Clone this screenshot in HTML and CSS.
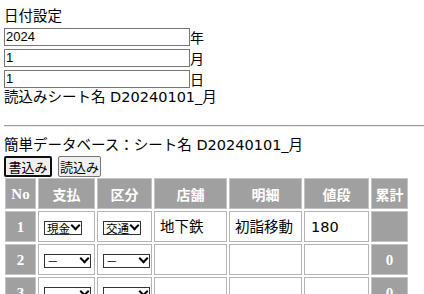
FILE: index.html
```html
<!DOCTYPE html>
<html lang="ja">
<head>
<meta charset="utf-8">
<title>簡単データベース</title>
<link rel="stylesheet" href="styles.css">
</head>
<body>
<div class="title">日付設定</div>
<div class="date-row"><input class="date-input" type="text" value="2024"><span class="unit">年</span></div>
<div class="date-row"><input class="date-input" type="text" value="1"><span class="unit">月</span></div>
<div class="date-row"><input class="date-input" type="text" value="1"><span class="unit">日</span></div>
<div class="sheet">読込みシート名 D20240101_月</div>
<hr class="rule">
<div class="db-title">簡単データベース：シート名 D20240101_月</div>
<div class="buttons">
  <button class="btn btn-focus" type="button">書込み</button>
  <button class="btn" type="button">読込み</button>
</div>
<table class="db">
  <tr>
    <th class="c-no latin">No</th>
    <th class="c-pay">支払</th>
    <th class="c-kind">区分</th>
    <th class="c-shop">店舗</th>
    <th class="c-memo">明細</th>
    <th class="c-price">値段</th>
    <th class="c-sum">累計</th>
  </tr>
  <tr>
    <th class="latin">1</th>
    <td><span class="sel sel-narrow"><select><option>現金</option><option>－</option></select></span></td>
    <td><span class="sel sel-narrow"><select><option>交通</option><option>－</option></select></span></td>
    <td>地下鉄</td>
    <td>初詣移動</td>
    <td class="price">180</td>
    <th class="latin"></th>
  </tr>
  <tr>
    <th class="latin">2</th>
    <td><span class="sel"><select><option>－</option><option>現金</option></select></span></td>
    <td><span class="sel"><select><option>－</option><option>交通</option></select></span></td>
    <td></td>
    <td></td>
    <td class="price"></td>
    <th class="latin">0</th>
  </tr>
  <tr>
    <th class="latin">3</th>
    <td><span class="sel"><select><option>－</option><option>現金</option></select></span></td>
    <td><span class="sel"><select><option>－</option><option>交通</option></select></span></td>
    <td></td>
    <td></td>
    <td class="price"></td>
    <th class="latin">0</th>
  </tr>
</table>
</body>
</html>
```
FILE: styles.css
```css
html, body {
  margin: 0;
  background: #fff;
}
body {
  padding: 4px 0 0 4px;
  font-family: "DejaVu Sans", "Noto Sans CJK JP", sans-serif;
  font-size: 14.5px;
  line-height: 20px;
  color: #000;
}
.title {
  height: 22px;
  line-height: 24px;
}
.date-row {
  display: flex;
  align-items: center;
  height: 21px;
}
.date-input {
  box-sizing: border-box;
  width: 186px;
  height: 18px;
  margin: 0;
  padding: 0 1px;
  border: 1px solid #767676;
  font-family: "Liberation Sans", Arial, sans-serif;
  font-size: 13px;
  color: #000;
  background: #fff;
}
.unit {
  line-height: 18px;
  font-family: "Noto Sans CJK JP", sans-serif;
  font-size: 14px;
}
.sheet {
  height: 20px;
  margin-top: -2px;
}
.rule {
  margin: 18px 0 0 0;
  height: 0;
  border: 0;
  border-top: 1px solid #9a9a9a;
  border-bottom: 1px solid #eee;
}
.db-title {
  margin-top: 8px;
  height: 20px;
}
.buttons {
  display: flex;
  gap: 6px;
  margin-top: 1px;
}
.btn {
  box-sizing: border-box;
  height: 21px;
  width: 43px;
  margin: 0;
  padding: 0;
  border: 1px solid #767676;
  border-radius: 2px;
  background: #efefef;
  font-family: "Noto Sans CJK JP", sans-serif;
  font-size: 13px;
  line-height: 18px;
  color: #000;
}
.btn-focus {
  width: 48px;
  border: 2px solid #101010;
}
.db {
  border-collapse: separate;
  border-spacing: 2px;
  margin: -1px 0 0 -1px;
  table-layout: fixed;
  width: 407px;
}
.db th, .db td {
  box-sizing: border-box;
  height: 31px;
  padding: 0 2px;
  border: 1px solid #b4b4b4;
  vertical-align: middle;
  overflow: hidden;
  white-space: nowrap;
}
.db th {
  background: #a0a0a0;
  color: #fff;
  font-family: "Noto Sans CJK JP", sans-serif;
  font-weight: bold;
  font-size: 14px;
  text-align: center;
  border-color: #c4c4c4;
}
.db th.latin {
  font-family: "Liberation Serif", serif;
  font-size: 15px;
}
.db td {
  background: #fff;
  text-align: left;
  padding: 0 5px;
  font-family: "DejaVu Sans", "Noto Sans CJK JP", sans-serif;
}
.c-no { width: 31px; }
.c-pay { width: 57px; }
.c-kind { width: 55px; }
.c-shop { width: 73px; }
.c-memo { width: 73px; }
.c-price { width: 65px; }
.c-sum { width: 37px; }
.db td.price { padding-left: 6px; }
.sel {
  position: relative;
  display: inline-block;
  width: 47px;
  height: 14px;
  vertical-align: middle;
}
.sel-narrow {
  width: 38px;
}
.sel select {
  appearance: none;
  -webkit-appearance: none;
  box-sizing: border-box;
  width: 100%;
  height: 14px;
  margin: 0;
  padding: 0 0 0 2px;
  border: 1px solid #333;
  border-radius: 0;
  background: #fff;
  font-family: "Noto Sans CJK JP", sans-serif;
  font-size: 11.5px;
  line-height: 12px;
  color: #000;
  display: block;
}
.sel::after {
  content: "";
  position: absolute;
  right: 3px;
  top: 1px;
  width: 5px;
  height: 5px;
  border-right: 2px solid #000;
  border-bottom: 2px solid #000;
  transform: rotate(45deg);
  pointer-events: none;
}
```
